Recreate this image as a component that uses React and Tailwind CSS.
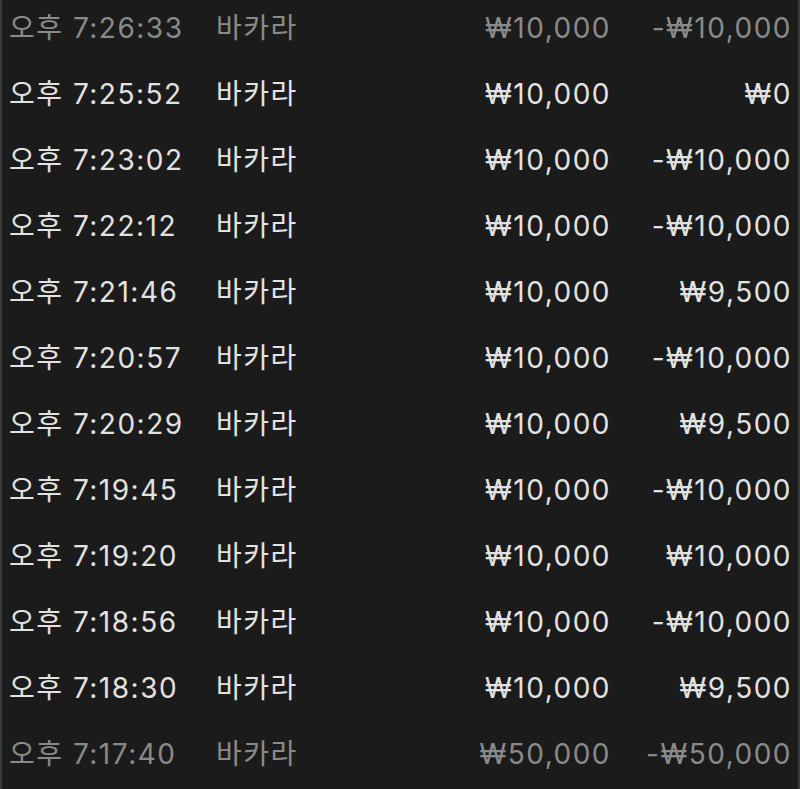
import React from "react";

const rows = [
  ["오후 7:26:33", "₩10,000", "-₩10,000", true],
  ["오후 7:25:52", "₩10,000", "₩0"],
  ["오후 7:23:02", "₩10,000", "-₩10,000"],
  ["오후 7:22:12", "₩10,000", "-₩10,000"],
  ["오후 7:21:46", "₩10,000", "₩9,500"],
  ["오후 7:20:57", "₩10,000", "-₩10,000"],
  ["오후 7:20:29", "₩10,000", "₩9,500"],
  ["오후 7:19:45", "₩10,000", "-₩10,000"],
  ["오후 7:19:20", "₩10,000", "₩10,000"],
  ["오후 7:18:56", "₩10,000", "-₩10,000"],
  ["오후 7:18:30", "₩10,000", "₩9,500"],
  ["오후 7:17:40", "₩50,000", "-₩50,000", true],
];

export default function App() {
  return (
    <div
      className="w-[800px] h-[789px] overflow-hidden bg-[#1b1b1b] border-l-2 border-r-2 border-[#3a3a3a]"
      style={{ fontFamily: "Inter, 'Noto Sans CJK KR', sans-serif" }}
    >
      <div className="-mt-[5px] flex flex-col">
        {rows.map(([time, amt, res, dim], i) => (
          <div
            key={i}
            className={`flex items-center h-[66px] text-[28px] tracking-[1.5px] ${dim ? "text-[#8a8a8a]" : "text-[#e2e2e2]"}`}
          >
            <div className="w-[214px] pl-[7px] whitespace-nowrap">{time}</div>
            <div className="w-[170px] whitespace-nowrap">바카라</div>
            <div className="w-[225px] text-right whitespace-nowrap">{amt}</div>
            <div className="w-[181px] text-right whitespace-nowrap">{res}</div>
          </div>
        ))}
      </div>
    </div>
  );
}
